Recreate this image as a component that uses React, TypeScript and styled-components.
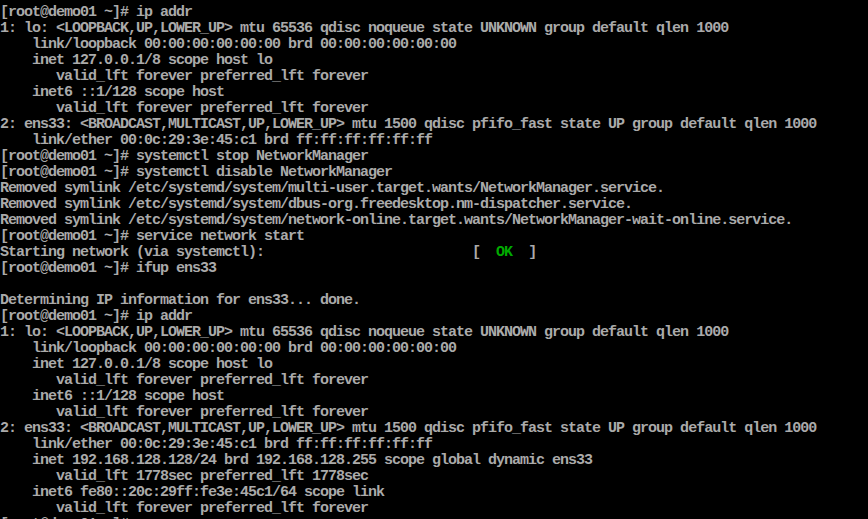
import React from "react";
import styled, { createGlobalStyle } from "styled-components";

const Global = createGlobalStyle`
  html, body {
    margin: 0;
    padding: 0;
    background: #000;
    width: 100%;
    height: 100%;
    overflow: hidden;
  }
`;

const Screen = styled.div`
  width: 868px;
  height: 519px;
  background: #000;
  overflow: hidden;
  padding-top: 5px;
  box-sizing: border-box;
  display: flex;
  flex-direction: column;
`;

const Line = styled.div`
  height: 16px;
  line-height: 16px;
  white-space: pre;
  font-family: "Liberation Mono", "DejaVu Sans Mono", monospace;
  font-size: 15px;
  letter-spacing: -1px;
  font-weight: bold;
  color: #aaaaaa;
  flex: none;
`;

const Ok = styled.span<{ $c: string }>`
  color: ${(p) => p.$c};
`;

const P = "[root@demo01 ~]# ";

const loBlock = [
  "1: lo: <LOOPBACK,UP,LOWER_UP> mtu 65536 qdisc noqueue state UNKNOWN group default qlen 1000",
  "    link/loopback 00:00:00:00:00:00 brd 00:00:00:00:00:00",
  "    inet 127.0.0.1/8 scope host lo",
  "       valid_lft forever preferred_lft forever",
  "    inet6 ::1/128 scope host",
  "       valid_lft forever preferred_lft forever",
  "2: ens33: <BROADCAST,MULTICAST,UP,LOWER_UP> mtu 1500 qdisc pfifo_fast state UP group default qlen 1000",
  "    link/ether 00:0c:29:3e:45:c1 brd ff:ff:ff:ff:ff:ff",
];

const before: string[] = [
  P + "ip addr",
  ...loBlock,
  P + "systemctl stop NetworkManager",
  P + "systemctl disable NetworkManager",
  "Removed symlink /etc/systemd/system/multi-user.target.wants/NetworkManager.service.",
  "Removed symlink /etc/systemd/system/dbus-org.freedesktop.nm-dispatcher.service.",
  "Removed symlink /etc/systemd/system/network-online.target.wants/NetworkManager-wait-online.service.",
  P + "service network start",
];

const after: string[] = [
  P + "ifup ens33",
  "",
  "Determining IP information for ens33... done.",
  P + "ip addr",
  ...loBlock,
  "    inet 192.168.128.128/24 brd 192.168.128.255 scope global dynamic ens33",
  "       valid_lft 1778sec preferred_lft 1778sec",
  "    inet6 fe80::20c:29ff:fe3e:45c1/64 scope link",
  "       valid_lft forever preferred_lft forever",
  P,
];

export default function App() {
  const start = "Starting network (via systemctl):";
  return (
    <>
      <Global />
      <Screen>
        {before.map((l, i) => (
          <Line key={"b" + i}>{l}</Line>
        ))}
        <Line>
          {start.padEnd(59, " ")}
          {"[  "}
          <Ok $c="#00aa00">OK</Ok>
          {"  ]"}
        </Line>
        {after.map((l, i) => (
          <Line key={"a" + i}>{l}</Line>
        ))}
      </Screen>
    </>
  );
}
